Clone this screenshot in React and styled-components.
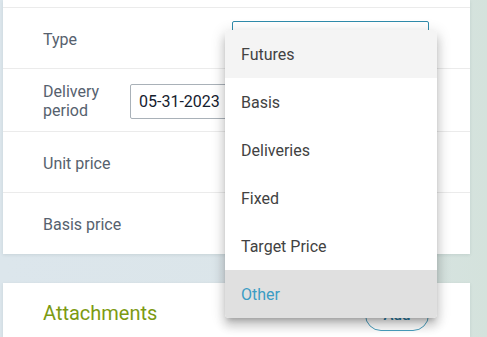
import React from 'react';
import styled, { createGlobalStyle } from 'styled-components';

const options = ['Futures', 'Basis', 'Deliveries', 'Fixed', 'Target Price', 'Other'];

export default function App() {
  return (
    <Page>
      <GlobalStyle />
      <Card>
        <TopStub />
        <Row>
          <Label>Type</Label>
          <SelectBox>
            <Menu>
              {options.map((o, i) => (
                <MenuItem key={o} $focused={i === 0} $selected={o === 'Other'}>
                  {o}
                </MenuItem>
              ))}
            </Menu>
          </SelectBox>
        </Row>
        <Row $tall>
          <Label>
            Delivery
            <br />
            period
          </Label>
          <DateInput defaultValue="05-31-2023" />
        </Row>
        <Row>
          <Label>Unit price</Label>
        </Row>
        <Row $last>
          <Label>Basis price</Label>
        </Row>
      </Card>
      <Card $second>
        <SectionHead>
          <Title>Attachments</Title>
          <AddButton>Add</AddButton>
        </SectionHead>
      </Card>
    </Page>
  );
}

const GlobalStyle = createGlobalStyle`
  * {
    box-sizing: border-box;
  }
  body {
    margin: 0;
    font-family: Roboto, 'Noto Sans', sans-serif;
    background: linear-gradient(90deg, #dce6ec 0%, #dbe5e9 60%, #d4e2dc 100%);
    overflow: hidden;
  }
`;

const Page = styled.div`
  display: flex;
  flex-direction: column;
  gap: 29px;
  width: 487px;
  height: 337px;
  padding: 0 17px 0 3px;
`;

const Card = styled.div`
  display: flex;
  flex-direction: column;
  background: #fff;
  box-shadow: 0 1px 3px rgba(60, 80, 90, 0.12);
  ${p => p.$second && 'flex: 1;'}
`;

const TopStub = styled.div`
  height: 8px;
  border-bottom: 1px solid #ebebeb;
`;

const Row = styled.div`
  display: flex;
  align-items: center;
  height: ${p => (p.$tall ? 63 : 61)}px;
  padding: 2px 41px 0 40px;
  border-bottom: ${p => (p.$last ? 'none' : '1px solid #ebebeb')};
`;

const Label = styled.div`
  width: 87px;
  font-size: 16px;
  line-height: 19px;
  color: #56616e;
`;

const SelectBox = styled.div`
  position: relative;
  align-self: flex-start;
  width: 197px;
  height: 36px;
  margin-left: auto;
  margin-top: 11px;
  border: 1px solid #2f8bab;
  border-radius: 2px;
`;

const Menu = styled.ul`
  position: absolute;
  top: 8px;
  left: -8px;
  width: 212px;
  margin: 0;
  padding: 0;
  list-style: none;
  background: #fff;
  border-radius: 4px;
  overflow: hidden;
  z-index: 10;
  box-shadow: 0 5px 5px -3px rgba(0, 0, 0, 0.2), 0 8px 10px 1px rgba(0, 0, 0, 0.14),
    0 3px 14px 2px rgba(0, 0, 0, 0.12);
`;

const MenuItem = styled.li`
  display: flex;
  align-items: center;
  height: 48px;
  padding-left: 16px;
  font-size: 16px;
  color: ${p => (p.$selected ? '#3b9cc4' : '#424242')};
  background: ${p => (p.$selected ? '#e0e0e0' : p.$focused ? '#f4f4f4' : '#fff')};
`;

const DateInput = styled.input`
  width: 120px;
  height: 35px;
  padding: 0 8px;
  border: 1px solid #a9b1b8;
  border-radius: 2px;
  font-family: Roboto, sans-serif;
  font-size: 16px;
  color: #15202e;
  outline: none;
`;

const SectionHead = styled.div`
  display: flex;
  align-items: flex-start;
  justify-content: space-between;
  padding: 0 41px 0 40px;
`;

const Title = styled.h2`
  margin: 18px 0 0;
  font-size: 20px;
  line-height: 24px;
  font-weight: 400;
  color: #7c9a12;
`;

const AddButton = styled.button`
  width: 64px;
  height: 32px;
  margin-top: 16px;
  border: 1.5px solid #4aa0bf;
  border-radius: 16px;
  background: #fff;
  font-family: Roboto, sans-serif;
  font-size: 15px;
  font-weight: 500;
  color: #2a7fa8;
`;
